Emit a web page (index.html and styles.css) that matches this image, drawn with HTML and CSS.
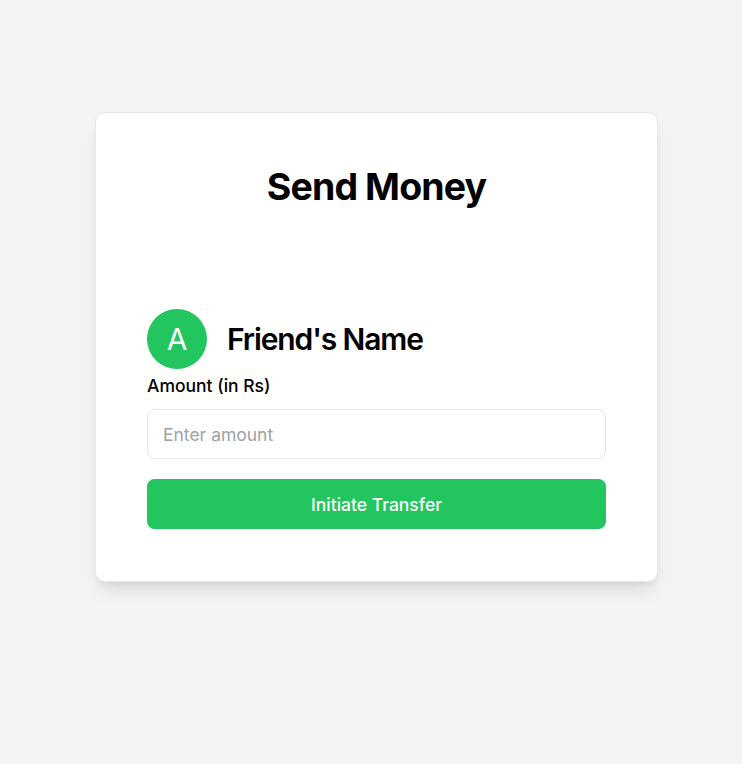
FILE: index.html
```html
<!DOCTYPE html>
<html lang="en">
<head>
<meta charset="utf-8">
<title>Send Money</title>
<link rel="stylesheet" href="styles.css">
</head>
<body>
<div class="page">
  <div class="card">
    <div class="card-header">
      <h2 class="title">Send Money</h2>
    </div>
    <div class="card-body">
      <div class="friend">
        <div class="avatar"><span>A</span></div>
        <h3 class="friend-name">Friend's Name</h3>
      </div>
      <label class="label" for="amount">Amount (in Rs)</label>
      <input class="input" id="amount" type="number" placeholder="Enter amount">
      <button class="button" type="button">Initiate Transfer</button>
    </div>
  </div>
</div>
</body>
</html>
```
FILE: styles.css
```css
* { box-sizing: border-box; }
html, body { margin: 0; padding: 0; }
body {
  background: #f3f4f6;
  font-family: Inter, "Noto Sans", sans-serif;
  color: #000;
  height: 764px;
}
.page {
  padding: 112px 0 0 95px;
}
.card {
  width: 563px;
  background: #fff;
  border: 1px solid #e5e7eb;
  border-radius: 10px;
  padding: 21px 21px 22px;
  box-shadow: 0 12px 19px -4px rgba(0,0,0,0.1), 0 5px 8px -5px rgba(0,0,0,0.1);
}
.card-header {
  padding: 30px;
}
.title {
  margin: 0;
  font-size: 37.5px;
  line-height: 45px;
  font-weight: 700;
  text-align: center;
  letter-spacing: -0.9px;
}
.card-body {
  margin-top: 40px;
  padding: 30px;
  display: flex;
  flex-direction: column;
}
.friend {
  display: flex;
  align-items: center;
  gap: 20px;
  height: 60px;
}
.avatar {
  width: 60px;
  height: 60px;
  border-radius: 50%;
  background: #22c55e;
  display: flex;
  align-items: center;
  justify-content: center;
  color: #fff;
  font-size: 30px;
  line-height: 40px;
}
.friend-name {
  margin: 0;
  font-size: 30px;
  line-height: 40px;
  font-weight: 600;
  letter-spacing: -1.1px;
}
.label {
  margin-top: 4px;
  font-size: 17.5px;
  line-height: 25px;
  font-weight: 500;
}
.input {
  margin-top: 11px;
  width: 100%;
  height: 50px;
  border: 1px solid #e5e7eb;
  border-radius: 7.5px;
  padding: 0 15px;
  font-family: inherit;
  font-size: 17.5px;
  color: #000;
  background: #fff;
  outline: none;
}
.input::placeholder { color: #9ca3a5; }
.button {
  margin-top: 20px;
  width: 100%;
  height: 50px;
  border: none;
  border-radius: 7.5px;
  background: #22c55e;
  color: #fff;
  font-family: inherit;
  font-size: 17.5px;
  font-weight: 500;
}
```
